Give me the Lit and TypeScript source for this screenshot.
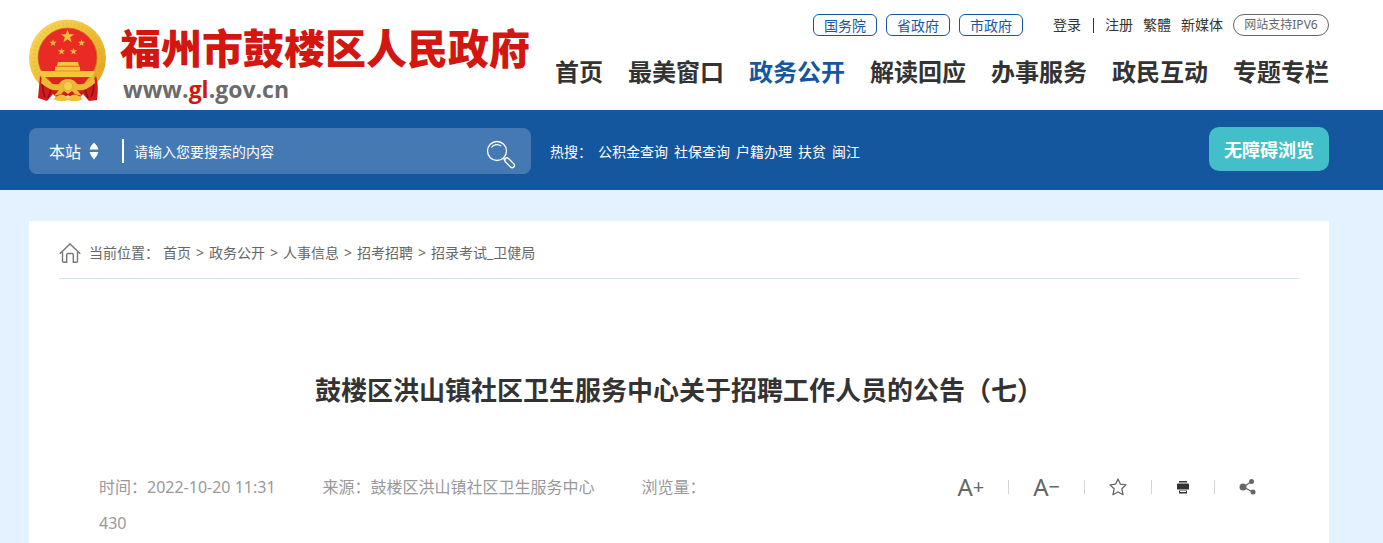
import { LitElement, html, css, svg } from "lit";
import { customElement, state } from "lit/decorators.js";
import { classMap } from "lit/directives/class-map.js";

const star = (cx: number, cy: number, r: number) => {
  const points: string[] = [];
  for (let i = 0; i < 10; i++) {
    const radius = i % 2 ? r * 0.4 : r;
    const a = (Math.PI / 5) * i - Math.PI / 2;
    points.push(`${(cx + radius * Math.cos(a)).toFixed(2)},${(cy + radius * Math.sin(a)).toFixed(2)}`);
  }
  return svg`<polygon points=${points.join(" ")} fill="#f3c238"/>`;
};

@customElement("site-emblem")
class SiteEmblem extends LitElement {
  static styles = css`
    :host { display: block; flex: none; }
    svg { display: block; }
  `;
  render() {
    return html`<svg width="78" height="84" viewBox="0 0 78 84" aria-hidden="true">
      <defs>
        <linearGradient id="gold" x1="0" y1="0" x2="1" y2="1">
          <stop offset="0" stop-color="#f9dc62"/><stop offset=".5" stop-color="#efbd35"/><stop offset="1" stop-color="#e0a01f"/>
        </linearGradient>
      </defs>
      <circle cx="38.500" cy="39" r="38.500" fill="url(#gold)"/>
      <circle cx="38.500" cy="39" r="33.500" fill="none" stroke="#d99b22" stroke-width="4" stroke-dasharray="2 2" opacity=".18"/>
      <path d="M11 57 Q16 65 25 65 L33 71 L39 69 L45 71 L53 65 Q62 65 67 57 Q70 66 68 81 L60 82 L54 75 L48 81 L39 76 L30 81 L24 75 L18 82 L9 79 Q10 68 11 57Z" fill="#cf1b1c"/>
      <path d="M14 60 Q13 72 16 78 M64 60 Q66 72 62 78 M23 68 L19 79 M55 68 L59 79" stroke="#8e0e12" stroke-width="1.500" fill="none"/>
      <circle cx="38.500" cy="38.500" r="29.500" fill="#e92a25" stroke="#c8731b" stroke-width=".8"/>
      ${star(38.5, 17.5, 7)}${star(24, 24, 3.8)}${star(52.5, 24, 3.8)}${star(32.5, 32.5, 3.8)}${star(44.5, 32.5, 3.8)}
      <path d="M29 43 h20 l1 4 h-22z M26 47.500 h25 v4.500 h15 a29 29 0 0 1 -3 6 h-49 a29 29 0 0 1 -3 -6 h15z" fill="#f4c63d"/>
      <path d="M28 47h22 M26 52h26" stroke="#d78c20" stroke-width=".8"/>
      <path d="M19 59 H59 Q54 68 45 70 L39 67 L33 70 Q24 68 19 59Z" fill="#dc2320"/>
      <path d="M13 56 Q19 67 30 65 Q33 60 39 60 Q45 60 48 65 Q59 67 65 56 L66 64 Q56 73 48 71 L53 77 L46 75 L43 72 L39 75 L35 72 L32 75 L25 77 L30 71 Q22 73 12 64Z" fill="#efb833"/>
      <circle cx="39" cy="67" r="4.500" fill="#f5cf50" stroke="#dc9a2a" stroke-width=".6"/>
      <path d="M24 80 Q31 74 35 76 L39 79 L43 76 Q48 74 54 80 Q46 84 39 81 Q32 84 24 80Z" fill="#f2bf39"/>
    </svg>`;
  }
}

@customElement("site-header")
class SiteHeader extends LitElement {
  static styles = css`
    :host { display: block; background: #fff; }
    .wrap { display: flex; justify-content: space-between; height: 110px; margin: 0 54px 0 29px; }
    .logo { display: flex; gap: 13px; padding-top: 19px; color: inherit; text-decoration: none; }
    .name { display: flex; flex-direction: column; padding-top: 7px; }
    .cn { font-size: 41px; line-height: 44px; font-weight: 900; color: #d3160f; white-space: nowrap; }
    .url { padding-left: 3px; font-family: "Open Sans", "Noto Sans", sans-serif; font-size: 23px; line-height: 38px; font-weight: 700; color: #6b6b6b; }
    .url b { color: #d3160f; font-weight: 700; }
    .right { display: flex; flex-direction: column; align-items: flex-end; padding-top: 14px; }
    .top { display: flex; align-items: center; height: 22px; font-size: 14px; line-height: 20px; white-space: nowrap; }
    a { color: #333; text-decoration: none; }
    .gov { display: flex; gap: 9px; margin-right: 30px; }
    .gov a { padding: 0 10px; border: 1px solid #15579f; border-radius: 6px; color: #15579f; line-height: 22px; height: 20px; }
    .links { display: flex; align-items: center; gap: 10px; }
    .bar { width: 1px; height: 15px; margin: 0 1px 0 2px; background: #333; }
    .ipv6 { box-sizing: border-box; width: 96px; height: 22px; border: 1px solid #666; border-radius: 11px; color: #666; font-size: 12px; text-align: center; }
    nav { display: flex; gap: 25px; padding-top: 18px; }
    nav a { font-size: 24px; line-height: 36px; font-weight: 700; white-space: nowrap; }
    nav a.on { color: #15579f; }
  `;
  private items = ["首页", "最美窗口", "政务公开", "解读回应", "办事服务", "政民互动", "专题专栏"];
  render() {
    return html`<header class="wrap">
      <a class="logo" href="#">
        <site-emblem></site-emblem>
        <span class="name"><span class="cn">福州市鼓楼区人民政府</span><span class="url">www.<b>gl</b>.gov.cn</span></span>
      </a>
      <div class="right">
        <div class="top">
          <div class="gov">${["国务院", "省政府", "市政府"].map((t) => html`<a href="#">${t}</a>`)}</div>
          <div class="links">
            <a href="#">登录</a><span class="bar"></span><a href="#">注册</a><a href="#">繁體</a><a href="#">新媒体</a><a class="ipv6" href="#">网站支持IPV6</a>
          </div>
        </div>
        <nav>${this.items.map((t) => html`<a href="#" class=${classMap({ on: t === "政务公开" })}>${t}</a>`)}</nav>
      </div>
    </header>`;
  }
}

@customElement("search-band")
class SearchBand extends LitElement {
  static styles = css`
    :host { display: block; background: #15579f; color: #fff; }
    .wrap { display: flex; align-items: center; height: 80px; margin: 0 54px 0 29px; font-size: 14px; }
    form { display: flex; align-items: center; box-sizing: border-box; width: 502px; height: 46px; padding: 0 15px 0 20px; margin: 2px 19px 0 0; border-radius: 8px; background: #4579b3; }
    select, input, button { font-family: inherit; color: #fff; background: none; border: 0; padding: 0; margin: 0; outline: none; }
    select { appearance: none; width: 34px; font-size: 16px; line-height: 24px; padding-top: 2px; }
    .scope { display: flex; align-items: center; gap: 6px; width: 73px; }
    .scope svg { pointer-events: none; }
    input { flex: 1; min-width: 0; border-left: 2px solid #fff; height: 24px; padding-left: 10px; font-size: 14px; }
    input::placeholder { color: #fff; opacity: 1; }
    svg { display: block; flex: none; }
    .go { padding-top: 8px; cursor: pointer; }
    .hot { display: flex; flex: 1; gap: 6px; padding-top: 4px; line-height: 20px; white-space: nowrap; }
    .hot a { color: #fff; text-decoration: none; }
    .access { width: 120px; height: 44px; margin-bottom: 2px; border-radius: 10px; background: #43bfc9; font-size: 18px; font-weight: 700; cursor: pointer; }
  `;
  @state() private query = "";
  render() {
    return html`<div class="wrap">
      <form role="search" @submit=${(e: Event) => e.preventDefault()}>
        <div class="scope">
          <select aria-label="搜索范围"><option>本站</option></select>
          <svg width="10" height="18" viewBox="0 0 10 18" fill="#fff"><path d="M5 .5Q8 3 9.500 7.500H.5Q2 3 5 .5ZM.5 10h9Q8 14.500 5 17.500 2 14.500 .5 10Z"/></svg>
        </div>
        <input type="text" aria-label="搜索内容" placeholder="请输入您要搜索的内容" .value=${this.query}
          @input=${(e: Event) => (this.query = (e.target as HTMLInputElement).value)} />
        <button class="go" aria-label="搜索">
          <svg width="30" height="30" viewBox="0 0 30 30" fill="none" stroke="#fff" stroke-width="1.300"><circle cx="11" cy="11" r="9.500"/><path d="M5.500 7.500A6.500 6.500 0 0 1 15 6M17.500 18.500L19.500 20.500"/><rect x="17.500" y="20.500" width="12" height="4.500" rx="2.250" transform="rotate(45 23.500 22.750)"/></svg>
        </button>
      </form>
      <div class="hot"><span>热搜：</span>${["公积金查询", "社保查询", "户籍办理", "扶贫", "闽江"].map((t) => html`<a href="#">${t}</a>`)}</div>
      <button class="access">无障碍浏览</button>
    </div>`;
  }
}

@customElement("article-card")
class ArticleCard extends LitElement {
  static styles = css`
    :host { display: block; background: #fff; padding: 0 30px; }
    .crumbs { display: flex; align-items: center; height: 50px; padding-top: 7px; border-bottom: 1px solid #d0dff0; font-size: 14px; line-height: 20px; color: #666; white-space: nowrap; }
    .crumbs svg { margin-right: 8px; }
    .label { margin-right: 4px; }
    .crumbs a { color: #666; text-decoration: none; }
    .sep { width: 18px; text-align: center; }
    h1 { margin: 91px 0 59px; font-size: 26px; line-height: 40px; font-weight: 700; color: #333; text-align: center; }
    .meta { display: flex; justify-content: space-between; align-items: flex-start; padding: 0 40px; }
    .info { width: 54%; font-size: 16px; line-height: 36px; color: #999; }
    .item { margin-right: 47px; }
    .tools { display: flex; align-items: center; height: 36px; padding-right: 3px; }
    button { display: flex; align-items: center; border: 0; padding: 0; background: none; font-family: inherit; font-size: 24px; line-height: 34px; color: #666; cursor: pointer; }
    small { font-size: 20px; }
    .tools i { width: 1px; height: 14px; margin: 0 24px; background: #d3d3d3; }
    svg { display: block; flex: none; }
  `;
  private path = ["首页", "政务公开", "人事信息", "招考招聘", "招录考试_卫健局"];
  render() {
    return html`
      <div class="crumbs">
        <svg width="22" height="20" viewBox="0 0 22 20" fill="none" stroke="#777" stroke-width="1.400"><path d="M.7 10.700L11 .9 21.300 10.700M3.500 9V18Q3.500 19.200 4.700 19.200H7.700V12Q7.700 10.500 9 10.500H13Q14.300 10.500 14.300 12V19.200H17.300Q18.500 19.200 18.500 18V9"/></svg>
        <span class="label">当前位置：</span>
        ${this.path.map((t, i) => html`${i ? html`<span class="sep">&gt;</span>` : ""}<a href="#">${t}</a>`)}
      </div>
      <h1>鼓楼区洪山镇社区卫生服务中心关于招聘工作人员的公告（七）</h1>
      <div class="meta">
        <div class="info"><span class="item">时间：2022-10-20 11:31</span><span class="item">来源：鼓楼区洪山镇社区卫生服务中心</span><span>浏览量：</span><wbr><span>430</span></div>
        <div class="tools">
          <button aria-label="放大字号">A<small>+</small></button><i></i>
          <button aria-label="缩小字号">A<small>−</small></button><i></i>
          <button aria-label="收藏"><svg width="18" height="18" viewBox="0 0 18 18" fill="none" stroke="#666" stroke-width="1.300" stroke-linejoin="round"><path d="M9 1L11.400 6.200 17 6.900 12.900 10.800 14 16.700 9 14 4 16.700 5.100 10.800 1 6.900 6.600 6.200Z"/></svg></button><i></i>
          <button aria-label="打印"><svg width="14" height="14" viewBox="0 0 14 14" fill="#333"><path d="M3 1h8v1.500H3zM1 4Q1 3.500 2 3.500H12Q13 3.500 13 4V9.500H1ZM3 10.500H11V13.500H3Z"/><path d="M4 11.500h6" stroke="#fff"/></svg></button><i></i>
          <button aria-label="分享"><svg width="17" height="18" viewBox="0 0 17 18" fill="#666"><path d="M12.500 3.500L4.500 9l9 5" fill="none" stroke="#666" stroke-width="1.300"/><circle cx="4" cy="9" r="3.500"/><circle cx="12.500" cy="3.500" r="2.500"/><circle cx="14" cy="14" r="2.500"/></svg></button>
        </div>
      </div>`;
  }
}

@customElement("app-root")
class AppRoot extends LitElement {
  static styles = css`
    :host { display: flex; flex-direction: column; min-height: 100vh; background: #e4f2ff; font-family: "Noto Sans", "Noto Sans CJK SC", sans-serif; }
    main { display: flex; flex: 1; margin: 31px 54px 0 29px; }
    article-card { flex: 1; min-width: 0; }
  `;
  render() {
    return html`<site-header></site-header><search-band></search-band><main><article-card></article-card></main>`;
  }
}
